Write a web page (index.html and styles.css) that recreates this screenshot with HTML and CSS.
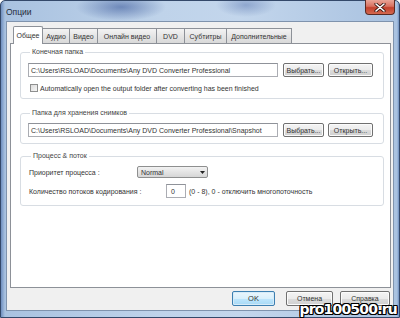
FILE: index.html
```html
<!DOCTYPE html>
<html lang="ru">
<head>
<meta charset="utf-8">
<title>Опции</title>
<link rel="stylesheet" href="styles.css">
</head>
<body>
<div class="window">
  <div class="titlebar">
    <span class="title">Опции</span>
    <span class="close"><svg width="12" height="9" viewBox="0 0 12 9"><path d="M2 1 L10 8 M10 1 L2 8" stroke="#3a1a14" stroke-width="3.2" stroke-linecap="round"/><path d="M2 1 L10 8 M10 1 L2 8" stroke="#ffffff" stroke-width="1.6" stroke-linecap="round"/></svg></span>
  </div>
  <div class="client">
    <div class="tabs">
      <span class="tab active">Общее</span>
      <span class="tab">Аудио</span>
      <span class="tab">Видео</span>
      <span class="tab">Онлайн видео</span>
      <span class="tab">DVD</span>
      <span class="tab">Субтитры</span>
      <span class="tab">Дополнительные</span>
    </div>
    <div class="panel">
      <fieldset class="group g1">
        <legend>Конечная папка</legend>
        <div class="row">
          <div class="field">C:\Users\RSLOAD\Documents\Any DVD Converter Professional</div>
          <span class="btn">Выбрать...</span>
          <span class="btn">Открыть...</span>
        </div>
        <div class="check"><span class="box"></span><span>Automatically open the output folder after converting has been finished</span></div>
      </fieldset>
      <fieldset class="group g2">
        <legend>Папка для хранения снимков</legend>
        <div class="row">
          <div class="field">C:\Users\RSLOAD\Documents\Any DVD Converter Professional\Snapshot</div>
          <span class="btn">Выбрать...</span>
          <span class="btn">Открыть...</span>
        </div>
      </fieldset>
      <fieldset class="group g3">
        <legend>Процесс &amp; поток</legend>
        <div class="prow">
          <span class="plabel">Приоритет процесса :</span>
          <span class="select"><span class="sval">Normal</span><span class="sarrow"><svg width="5" height="3" viewBox="0 0 5 3"><path d="M0 0 H5 L2.5 3 Z" fill="#222"/></svg></span></span>
        </div>
        <div class="prow r2">
          <span class="plabel">Количество потоков кодирования :</span>
          <span class="num">0</span>
          <span class="hint">(0 - 8), 0 - отключить многопоточность</span>
        </div>
      </fieldset>
    </div>
    <div class="footer">
      <span class="fbtn ok">OK</span>
      <span class="fbtn cancel">Отмена</span>
      <span class="fbtn help">Справка</span>
    </div>
  </div>
  <div class="watermark">pro100500.ru</div>
</div>
</body>
</html>
```
FILE: styles.css
```css
* { box-sizing: border-box; }
html, body { margin: 0; padding: 0; }
body {
  width: 400px;
  height: 318px;
  overflow: hidden;
  font-family: "Liberation Sans", Arial, sans-serif;
  font-size: 7px;
  color: #333;
  background: #fff;
}
.window {
  position: relative;
  width: 400px;
  height: 318px;
  display: flex;
  flex-direction: column;
  padding: 0 5px 6px 5px;
  border: 1px solid #34496a;
  border-radius: 5px 5px 0 0;
  background:
    radial-gradient(ellipse 45px 14px at 120px 6px, rgba(60,90,155,0.6), rgba(60,90,155,0) 100%),
    radial-gradient(ellipse 30px 12px at 245px 4px, rgba(80,110,170,0.45), rgba(80,110,170,0) 100%),
    linear-gradient(to right, #6f8fbf 0, #a9c2e0 4px, #bfd3ea 40%, #c3d6ec 60%, #a9c2e0 396px, #6f8fbf 100%);
}
.titlebar {
  height: 20px;
  display: flex;
  align-items: flex-start;
  justify-content: space-between;
  flex: none;
}
.title {
  font-size: 8.5px;
  color: #1e2b3c;
  margin-top: 6px;
}
.close {
  margin-top: -1px;
  margin-right: -1px;
  width: 30px;
  height: 15px;
  display: flex;
  align-items: center;
  justify-content: center;
  border: 1px solid #5a2a22;
  border-top: none;
  border-radius: 0 0 4px 4px;
  background: linear-gradient(#e9a597 0, #d8705f 45%, #c2402c 55%, #d46a50 100%);
}
.client {
  flex: 1;
  display: flex;
  flex-direction: column;
  border: 1px solid #7f93ad;
  background: #f0f0f0;
  padding: 4px 2px 0 3px;
}
.tabs {
  height: 17px;
  display: flex;
  align-items: flex-end;
  padding-left: 3px;
  position: relative;
  z-index: 1;
}
.tab {
  height: 15px;
  display: flex;
  align-items: center;
  justify-content: center;
  border: 1px solid #8d9198;
  border-left: none;
  border-bottom: none;
  background: linear-gradient(#f3f3f3, #e5e5e5 50%, #d9d9d9);
  white-space: nowrap;
  color: #333;
}
.tab:nth-child(2) { width: 27px; }
.tab:nth-child(3) { width: 28px; }
.tab:nth-child(4) { width: 59px; }
.tab:nth-child(5) { width: 28px; }
.tab:nth-child(6) { width: 42px; }
.tab:nth-child(7) { width: 65px; }
.tab.active {
  width: 30px;
  height: 18px;
  margin-bottom: -1px;
  border-left: 1px solid #8d9198;
  background: #fff;
  border-radius: 2px 2px 0 0;
}
.panel {
  height: 245px;
  border: 1px solid #8d9198;
  background: #fff;
  padding: 4px 6px 0 9px;
}
.group {
  margin: 0;
  border: 1px solid #d8dde3;
  border-radius: 3px;
  min-width: 0;
}
.group legend {
  padding: 0 2px;
  margin-left: 2px;
  line-height: 8px;
  color: #444;
}
.g1 { padding: 7px 6px 5px 7px; }
.g2 { margin-top: 10px; padding: 6px 6px 6px 7px; }
.g3 { margin-top: 8px; padding: 6px 6px 7px 8px; }
.row {
  display: flex;
  align-items: center;
  gap: 4px;
}
.field {
  width: 250px;
  height: 14px;
  border: 1px solid #abadb3;
  border-top-color: #8f9299;
  background: #fff;
  padding-left: 2px;
  display: flex;
  align-items: center;
  white-space: nowrap;
  overflow: hidden;
  margin-right: 1px;
}
.btn {
  height: 14px;
  width: 41px;
  display: flex;
  align-items: center;
  justify-content: center;
  border: 1px solid #707070;
  border-radius: 2px;
  background: linear-gradient(#f4f4f4, #ebebeb 50%, #dcdcdc 51%, #d0d0d0);
  box-shadow: inset 0 0 0 1px #fbfbfb;
  white-space: nowrap;
}
.btn + .btn { width: 45px; }
.check {
  display: flex;
  align-items: center;
  gap: 2px;
  margin-top: 6px;
  margin-left: 2px;
  height: 10px;
}
.box {
  width: 8px;
  height: 8px;
  border: 1px solid #8e8f8f;
  background: linear-gradient(135deg, #dcdcdc, #f6f6f6);
}
.prow {
  display: flex;
  align-items: center;
  height: 12px;
}
.prow.r2 { margin-top: 6px; height: 14px; }
.plabel { width: 108px; }
.r2 .plabel { width: 137px; }
.select {
  width: 71px;
  height: 12px;
  display: flex;
  align-items: center;
  justify-content: space-between;
  border: 1px solid #8e8f8f;
  border-radius: 2px;
  background: linear-gradient(#f2f2f2, #e4e4e4 50%, #d6d6d6);
  padding-left: 3px;
}
.sarrow {
  width: 10px;
  height: 10px;
  display: flex;
  align-items: center;
  justify-content: center;
}
.num {
  width: 20px;
  height: 14px;
  border: 1px solid #abadb3;
  border-top-color: #8f9299;
  background: #fff;
  padding-left: 4px;
  display: flex;
  align-items: center;
}
.hint { margin-left: 3px; white-space: nowrap; }
.footer {
  flex: 1;
  display: flex;
  justify-content: flex-end;
  align-items: flex-start;
  padding-top: 3px;
}
.fbtn {
  height: 15px;
  display: flex;
  align-items: center;
  justify-content: center;
  border: 1px solid #707070;
  border-radius: 2px;
  background: linear-gradient(#f4f4f4, #ebebeb 50%, #dcdcdc 51%, #d0d0d0);
  box-shadow: inset 0 0 0 1px #fbfbfb;
}
.ok {
  width: 43px;
  border-color: #3c7fb1;
  background: linear-gradient(#eaf6fd, #d9f0fc 50%, #bee6fd 51%, #a7d9f5);
  box-shadow: inset 0 0 0 1px #d6ebf8;
  font-size: 7.5px;
}
.cancel { width: 47px; margin-left: 11px; }
.help { width: 50px; margin-left: 7px; margin-right: 1px; }
.watermark {
  position: absolute;
  right: 2px;
  bottom: 0;
  font-family: "DejaVu Sans", sans-serif;
  font-weight: bold;
  font-size: 14px;
  letter-spacing: -0.8px;
  line-height: 16px;
  color: #fff;
  text-shadow: -1px -1px 0 #000, 1px -1px 0 #000, -1px 1px 0 #000, 1px 1px 0 #000, 0 1px 0 #000, 0 -1px 0 #000, 1px 0 0 #000, -1px 0 0 #000;
}
```
